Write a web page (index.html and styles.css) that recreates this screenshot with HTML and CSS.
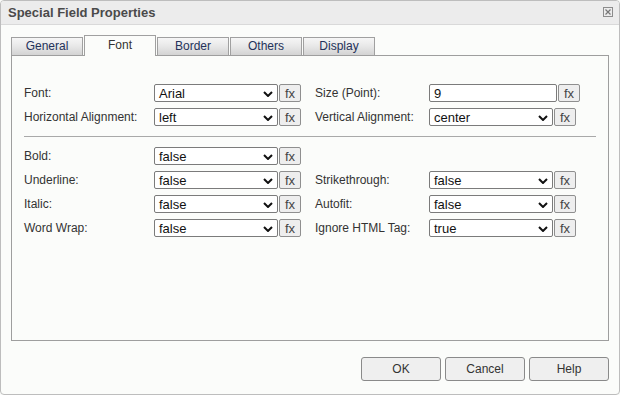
FILE: index.html
```html
<!DOCTYPE html>
<html lang="en">
<head>
    <meta charset="UTF-8">
    <title>Special Field Properties</title>
    <link rel="stylesheet" href="styles.css">
</head>
<body>
    <div class="dialog">
        <div class="titlebar">
            <span class="title">Special Field Properties</span>
            <span class="close">
                <svg width="10" height="10" viewBox="0 0 10 10">
                    <rect x="0.5" y="0.5" width="9" height="9" fill="none" stroke="#8c8c8c"/>
                    <path d="M2.5 2.5 L7.5 7.5 M7.5 2.5 L2.5 7.5" stroke="#777" stroke-width="1.2"/>
                </svg>
            </span>
        </div>

        <div class="content">
            <div class="tabs">
                <div class="tab">General</div>
                <div class="tab active">Font</div>
                <div class="tab">Border</div>
                <div class="tab">Others</div>
                <div class="tab">Display</div>
            </div>

            <div class="panel">
                <div class="row">
                    <div class="field">
                        <span class="label">Font:</span>
                        <div class="select"><span>Arial</span><svg class="chev" width="10" height="6" viewBox="0 0 10 6"><path d="M1 1 L5 5 L9 1" fill="none" stroke="#111" stroke-width="2"/></svg></div>
                        <button class="fx">fx</button>
                    </div>
                    <div class="field right">
                        <span class="label">Size (Point):</span>
                        <div class="text-input">9</div>
                        <button class="fx">fx</button>
                    </div>
                </div>
                <div class="row">
                    <div class="field">
                        <span class="label">Horizontal Alignment:</span>
                        <div class="select"><span>left</span><svg class="chev" width="10" height="6" viewBox="0 0 10 6"><path d="M1 1 L5 5 L9 1" fill="none" stroke="#111" stroke-width="2"/></svg></div>
                        <button class="fx">fx</button>
                    </div>
                    <div class="field right">
                        <span class="label">Vertical Alignment:</span>
                        <div class="select"><span>center</span><svg class="chev" width="10" height="6" viewBox="0 0 10 6"><path d="M1 1 L5 5 L9 1" fill="none" stroke="#111" stroke-width="2"/></svg></div>
                        <button class="fx">fx</button>
                    </div>
                </div>

                <div class="separator"></div>

                <div class="row">
                    <div class="field">
                        <span class="label">Bold:</span>
                        <div class="select"><span>false</span><svg class="chev" width="10" height="6" viewBox="0 0 10 6"><path d="M1 1 L5 5 L9 1" fill="none" stroke="#111" stroke-width="2"/></svg></div>
                        <button class="fx">fx</button>
                    </div>
                </div>
                <div class="row">
                    <div class="field">
                        <span class="label">Underline:</span>
                        <div class="select"><span>false</span><svg class="chev" width="10" height="6" viewBox="0 0 10 6"><path d="M1 1 L5 5 L9 1" fill="none" stroke="#111" stroke-width="2"/></svg></div>
                        <button class="fx">fx</button>
                    </div>
                    <div class="field right">
                        <span class="label">Strikethrough:</span>
                        <div class="select"><span>false</span><svg class="chev" width="10" height="6" viewBox="0 0 10 6"><path d="M1 1 L5 5 L9 1" fill="none" stroke="#111" stroke-width="2"/></svg></div>
                        <button class="fx">fx</button>
                    </div>
                </div>
                <div class="row">
                    <div class="field">
                        <span class="label">Italic:</span>
                        <div class="select"><span>false</span><svg class="chev" width="10" height="6" viewBox="0 0 10 6"><path d="M1 1 L5 5 L9 1" fill="none" stroke="#111" stroke-width="2"/></svg></div>
                        <button class="fx">fx</button>
                    </div>
                    <div class="field right">
                        <span class="label">Autofit:</span>
                        <div class="select"><span>false</span><svg class="chev" width="10" height="6" viewBox="0 0 10 6"><path d="M1 1 L5 5 L9 1" fill="none" stroke="#111" stroke-width="2"/></svg></div>
                        <button class="fx">fx</button>
                    </div>
                </div>
                <div class="row">
                    <div class="field">
                        <span class="label">Word Wrap:</span>
                        <div class="select"><span>false</span><svg class="chev" width="10" height="6" viewBox="0 0 10 6"><path d="M1 1 L5 5 L9 1" fill="none" stroke="#111" stroke-width="2"/></svg></div>
                        <button class="fx">fx</button>
                    </div>
                    <div class="field right">
                        <span class="label">Ignore HTML Tag:</span>
                        <div class="select"><span>true</span><svg class="chev" width="10" height="6" viewBox="0 0 10 6"><path d="M1 1 L5 5 L9 1" fill="none" stroke="#111" stroke-width="2"/></svg></div>
                        <button class="fx">fx</button>
                    </div>
                </div>
            </div>
        </div>

        <div class="footer">
            <button class="btn">OK</button>
            <button class="btn">Cancel</button>
            <button class="btn">Help</button>
        </div>
    </div>
</body>
</html>
```

FILE: styles.css
```css
html, body {
    margin: 0;
    padding: 0;
    background: #fbfcfa;
}
body {
    font-family: 'Liberation Sans', Arial, sans-serif;
    font-size: 12px;
    color: #333;
}
.dialog {
    width: 620px;
    height: 395px;
    box-sizing: border-box;
    border: 1px solid #bdbdbd;
    border-radius: 4px;
    background: #fbfcfa;
    display: flex;
    flex-direction: column;
    overflow: hidden;
}
.titlebar {
    height: 23px;
    flex: none;
    background: #ececec;
    border-bottom: 1px solid #d9d9d9;
    display: flex;
    align-items: center;
    justify-content: space-between;
    padding: 0 6px 0 7px;
}
.title {
    font-weight: bold;
    font-size: 13px;
    color: #4a4a4a;
}
.close {
    display: flex;
    margin-top: -1px;
}
.content {
    padding: 10px 10px 0 10px;
    flex: none;
}
.tabs {
    display: flex;
    align-items: flex-end;
    gap: 1px;
    height: 20px;
}
.tab {
    width: 70px;
    height: 17px;
    line-height: 17px;
    text-align: center;
    color: #24325a;
    border: 1px solid #a0a0a0;
    border-bottom: none;
    background: linear-gradient(#f6f6f6, #e9e9e9 45%, #d3d3d3);
}
.tab.active {
    height: 20px;
    line-height: 19px;
    margin-bottom: -1px;
    background: #fbfcfa;
    position: relative;
    z-index: 1;
    color: #333;
}
.panel {
    box-sizing: border-box;
    height: 286px;
    border: 1px solid #9e9e9e;
    background: #fbfcfa;
    padding: 28px 12px 0 12px;
}
.row {
    display: flex;
    height: 18px;
    margin-bottom: 6px;
}
.field {
    display: flex;
    align-items: center;
    width: 291px;
}
.field.right {
    width: auto;
}
.label {
    width: 130px;
    flex: none;
    white-space: nowrap;
}
.field.right .label {
    width: 114px;
}
.select, .text-input {
    box-sizing: border-box;
    width: 124px;
    height: 18px;
    border: 1px solid #7b7b7b;
    border-radius: 2px;
    background: #fff;
    display: flex;
    align-items: center;
    justify-content: space-between;
    padding: 0 4px 0 4px;
    font-size: 13px;
    color: #111;
}
.text-input {
    width: 128px;
}
.chev {
    margin-top: 1px;
}
.fx {
    box-sizing: border-box;
    width: 22px;
    height: 18px;
    margin-left: 1px;
    padding: 0;
    border: 1px solid #8f8f8f;
    border-radius: 2px;
    background: #eeeeee;
    color: #444;
    font-family: 'Liberation Sans', Arial, sans-serif;
    font-size: 13px;
    line-height: 15px;
}
.separator {
    height: 1px;
    background: #a9a9a9;
    margin: 10px 0 10px 0;
}
.footer {
    display: flex;
    justify-content: flex-end;
    gap: 4px;
    padding: 16px 10px 0 0;
}
.btn {
    box-sizing: border-box;
    width: 80px;
    height: 24px;
    border: 1px solid #8a8a8a;
    border-radius: 3px;
    background: #efefef;
    color: #333;
    font-family: 'Liberation Sans', Arial, sans-serif;
    font-size: 12px;
}
```
